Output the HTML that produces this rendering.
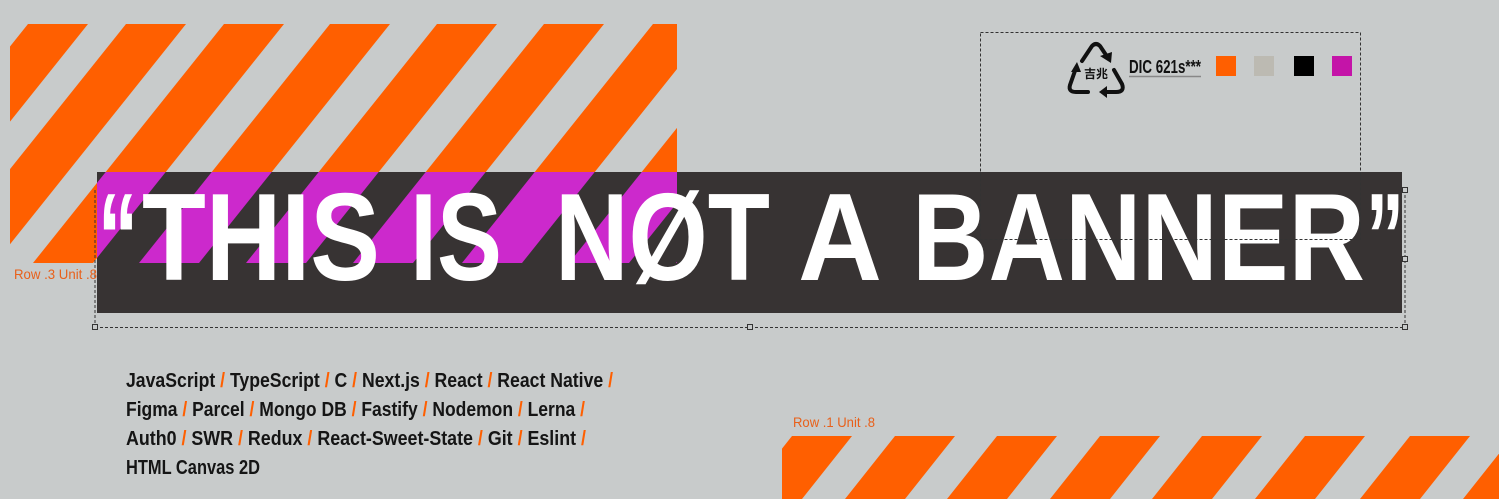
<!DOCTYPE html>
<html><head><meta charset="utf-8"><style>
html,body{margin:0;padding:0;background:#c8cbcb;width:1499px;height:499px;overflow:hidden}
svg{display:block}
</style></head><body>
<svg width="1499" height="499" viewBox="0 0 1499 499" xmlns="http://www.w3.org/2000/svg">
<defs>
<clipPath id="top"><rect x="10" y="24" width="667" height="239"/></clipPath>
<clipPath id="mag"><rect x="97" y="172" width="580" height="91"/></clipPath>
<clipPath id="bot"><rect x="782" y="436" width="717" height="63"/></clipPath>
<g id="stripes">
<polygon points="28,24 88,24 -103,263 -163,263"/>
<polygon points="126,24 186,24 -5,263 -65,263"/>
<polygon points="224,24 284,24 93,263 33,263"/>
<polygon points="330,24 390,24 199,263 139,263"/>
<polygon points="437,24 497,24 306,263 246,263"/>
<polygon points="544,24 604,24 413,263 353,263"/>
<polygon points="653,24 713,24 522,263 462,263"/>
<polygon points="760,24 820,24 629,263 569,263"/>
<polygon points="867,24 927,24 736,263 676,263"/>
</g>
</defs>
<rect width="1499" height="499" fill="#c8cbcb"/>
<g clip-path="url(#top)" fill="#ff5f00"><use href="#stripes"/></g>
<rect x="97" y="172" width="1305" height="141" fill="#373333"/>
<g clip-path="url(#mag)" fill="#cc29cc"><use href="#stripes"/></g>
<g font-family="Liberation Sans Narrow, Liberation Sans, sans-serif" font-weight="bold" font-size="124" fill="#fff">
<text x="98" y="280" textLength="40" lengthAdjust="spacingAndGlyphs">“</text>
<text x="142" y="280" textLength="238" lengthAdjust="spacingAndGlyphs">THIS</text>
<text x="410" y="280" textLength="92" lengthAdjust="spacingAndGlyphs">IS</text>
<text x="555" y="280" textLength="215" lengthAdjust="spacingAndGlyphs">NØT</text>
<text x="798" y="280" textLength="84" lengthAdjust="spacingAndGlyphs">A</text>
<text x="912" y="280" textLength="453" lengthAdjust="spacingAndGlyphs">BANNER</text>
<text x="1366" y="280" textLength="38" lengthAdjust="spacingAndGlyphs">”</text>
</g>

<g fill="none" stroke="#333" stroke-width="1" stroke-dasharray="3,2">
<line x1="95" y1="190" x2="95" y2="327"/>
<line x1="95" y1="327.5" x2="1405" y2="327.5"/>
<line x1="1405" y1="190" x2="1405" y2="327"/>
<rect x="980.5" y="32.5" width="380" height="207"/>
</g>
<g fill="#c8cbcb" stroke="#333" stroke-width="1">
<rect x="92.5" y="324.5" width="5" height="5"/>
<rect x="747.5" y="324.5" width="5" height="5"/>
<rect x="1402.5" y="324.5" width="5" height="5"/>
<rect x="1402.5" y="256.5" width="5" height="5"/>
<rect x="1402.5" y="187.5" width="5" height="5"/>
</g>

<text x="14" y="279" font-family="Liberation Sans Narrow, Liberation Sans, sans-serif" font-size="14" fill="#e8601a" textLength="83" lengthAdjust="spacingAndGlyphs">Row .3 Unit .8</text>
<text x="793" y="427" font-family="Liberation Sans Narrow, Liberation Sans, sans-serif" font-size="14" fill="#e8601a" textLength="82" lengthAdjust="spacingAndGlyphs">Row .1 Unit .8</text>

<!-- recycle icon -->
<g fill="none" stroke="#111" stroke-width="4" stroke-linecap="round" stroke-linejoin="round">
<path d="M1082,61 L1092,46 Q1096,42 1100,46 L1106,55"/>
<path d="M1076,68 L1070,85 Q1068,92 1076,92 L1088,92"/>
<path d="M1114,70 L1122,84 Q1125,92 1116,92 L1106,92"/>
</g>
<g fill="#111">
<polygon points="1100,56 1112,52 1111,63"/>
<polygon points="1071,72 1081,72 1077,62"/>
<polygon points="1107,86 1107,98 1099,92"/>
</g>
<text x="1096" y="78" text-anchor="middle" font-family="Noto Sans CJK SC, sans-serif" font-size="12" font-weight="bold" fill="#111">吉兆</text>
<text x="1129" y="73" font-family="Liberation Sans Narrow, Liberation Sans, sans-serif" font-weight="bold" font-size="18" fill="#111" textLength="72" lengthAdjust="spacingAndGlyphs">DIC 621s***</text>
<line x1="1129" y1="76.5" x2="1201" y2="76.5" stroke="#888" stroke-width="1.5"/>
<rect x="1216" y="56" width="20" height="20" fill="#ff5f00"/>
<rect x="1254" y="56" width="20" height="20" fill="#bcbab2"/>
<rect x="1294" y="56" width="20" height="20" fill="#000"/>
<rect x="1332" y="56" width="20" height="20" fill="#c414a8"/>

<g clip-path="url(#bot)" fill="#ff5f00">
<polygon points="689,436 749,436 699,499 639,499"/>
<polygon points="792,436 852,436 802,499 742,499"/>
<polygon points="895,436 955,436 905,499 845,499"/>
<polygon points="997,436 1057,436 1007,499 947,499"/>
<polygon points="1100,436 1160,436 1110,499 1050,499"/>
<polygon points="1202,436 1262,436 1212,499 1152,499"/>
<polygon points="1305,436 1365,436 1315,499 1255,499"/>
<polygon points="1410,436 1470,436 1420,499 1360,499"/>
<polygon points="1513,436 1573,436 1523,499 1463,499"/>
</g>

<g font-family="Liberation Sans Narrow, Liberation Sans, sans-serif" font-weight="bold" font-size="20" fill="#151515">
<text x="126" y="387" textLength="487" lengthAdjust="spacingAndGlyphs">JavaScript <tspan fill="#ff5f00">/</tspan> TypeScript <tspan fill="#ff5f00">/</tspan> C <tspan fill="#ff5f00">/</tspan> Next.js <tspan fill="#ff5f00">/</tspan> React <tspan fill="#ff5f00">/</tspan> React Native <tspan fill="#ff5f00">/</tspan></text>
<text x="126" y="416" textLength="459" lengthAdjust="spacingAndGlyphs">Figma <tspan fill="#ff5f00">/</tspan> Parcel <tspan fill="#ff5f00">/</tspan> Mongo DB <tspan fill="#ff5f00">/</tspan> Fastify <tspan fill="#ff5f00">/</tspan> Nodemon <tspan fill="#ff5f00">/</tspan> Lerna <tspan fill="#ff5f00">/</tspan></text>
<text x="126" y="445" textLength="460" lengthAdjust="spacingAndGlyphs">Auth0 <tspan fill="#ff5f00">/</tspan> SWR <tspan fill="#ff5f00">/</tspan> Redux <tspan fill="#ff5f00">/</tspan> React-Sweet-State <tspan fill="#ff5f00">/</tspan> Git <tspan fill="#ff5f00">/</tspan> Eslint <tspan fill="#ff5f00">/</tspan></text>
<text x="126" y="474" textLength="134" lengthAdjust="spacingAndGlyphs">HTML Canvas 2D</text>
</g>
</svg>
</body></html>
